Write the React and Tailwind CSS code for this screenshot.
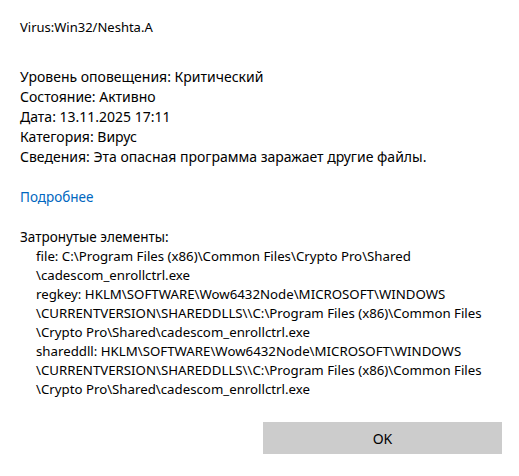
import React from 'react';

const details = [
  ['Уровень оповещения:', 'Критический'],
  ['Состояние:', 'Активно'],
  ['Дата:', '13.11.2025 17:11'],
  ['Категория:', 'Вирус'],
  ['Сведения:', 'Эта опасная программа заражает другие файлы.'],
];

const items = [
  'file: C:\\Program Files (x86)\\Common Files\\Crypto Pro\\Shared',
  '\\cadescom_enrollctrl.exe',
  'regkey: HKLM\\SOFTWARE\\Wow6432Node\\MICROSOFT\\WINDOWS',
  '\\CURRENTVERSION\\SHAREDDLLS\\\\C:\\Program Files (x86)\\Common Files',
  '\\Crypto Pro\\Shared\\cadescom_enrollctrl.exe',
  'shareddll: HKLM\\SOFTWARE\\Wow6432Node\\MICROSOFT\\WINDOWS',
  '\\CURRENTVERSION\\SHAREDDLLS\\\\C:\\Program Files (x86)\\Common Files',
  '\\Crypto Pro\\Shared\\cadescom_enrollctrl.exe',
];

export default function App() {
  return (
    <div className="w-[519px] h-[476px] bg-white text-black font-['Noto_Sans',sans-serif] flex flex-col">
      <div className="pl-5 pt-[17px] text-[13px] leading-[20px]">Virus:Win32/Neshta.A</div>

      <div className="pl-5 pt-[30px] text-[14px] leading-[20px]">
        {details.map(([k, v]) => (
          <div key={k}>
            {k} {v}
          </div>
        ))}
      </div>

      <div className="pl-5 pt-[20px] text-[13.5px] leading-[20px] text-[#0067c0]">Подробнее</div>

      <div className="pl-5 pt-[20px] text-[13.5px] leading-[20px]">Затронутые элементы:</div>
      <div className="pl-[36px] text-[13.25px] leading-[19px]">
        {items.map((line, i) => (
          <div key={i}>{line}</div>
        ))}
      </div>

      <div className="flex justify-end pr-[17px] pt-[23px]">
        <button className="w-[239px] h-[32px] bg-[#cccccc] text-[14px]">OK</button>
      </div>
    </div>
  );
}
